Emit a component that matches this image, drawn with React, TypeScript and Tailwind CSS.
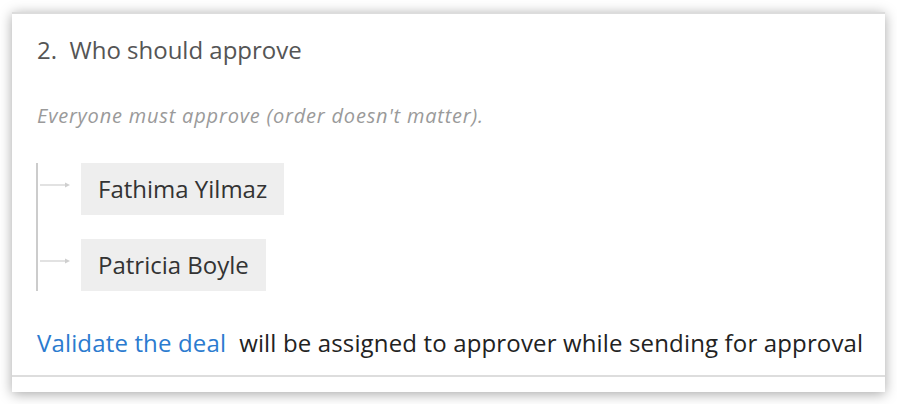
const approvers = ['Fathima Yilmaz', 'Patricia Boyle'];

const Arrow = () => (
  <svg width="30" height="8" viewBox="0 0 30 8" className="shrink-0">
    <line x1="0" y1="4" x2="26" y2="4" stroke="#cfcfcf" strokeWidth="1.2" />
    <path d="M25 1.5 L30 4 L25 6.5 Z" fill="#cfcfcf" />
  </svg>
);

export default function App() {
  return (
    <div className="min-h-screen bg-white pl-[12px] pt-[12px] font-['Open_Sans',sans-serif]">
      <div className="w-[873px] h-[380px] bg-white border-t-2 border-[#dcdcdc] shadow-[0_2px_12px_rgba(0,0,0,0.35)] flex flex-col">
        <div className="pl-[25px] pr-[12px]">
          <h2 className="mt-[22px] text-[24px] leading-[28px] text-[#555]">2.&nbsp; Who should approve</h2>
          <p className="mt-[41px] text-[20px] leading-[22px] tracking-[0.8px] italic text-[#9a9a9a]">
            Everyone must approve (order doesn't matter).
          </p>
          <div className="mt-[36px] ml-[-1px] border-l-2 border-[#cccccc] flex flex-col gap-[24px] w-fit">
            {approvers.map((name) => (
              <div key={name} className="flex items-start">
                <div className="pt-[18px] pl-[2px]">
                  <Arrow />
                </div>
                <div className="ml-[11px] h-[52px] px-[17px] flex items-center bg-[#eeeeee] text-[24px] text-[#333]">
                  {name}
                </div>
              </div>
            ))}
          </div>
          <p className="mt-[38px] whitespace-nowrap text-[24px] leading-[28px] tracking-[0.15px] text-[#222]">
            <span className="text-[#2b7bcf]">Validate the deal</span>
            <span className="ml-[13px]">will be assigned to approver while sending for approval</span>
          </p>
        </div>
        <div className="mt-auto mb-[15px] h-[2px] bg-[#dddddd]" />
      </div>
    </div>
  );
}
